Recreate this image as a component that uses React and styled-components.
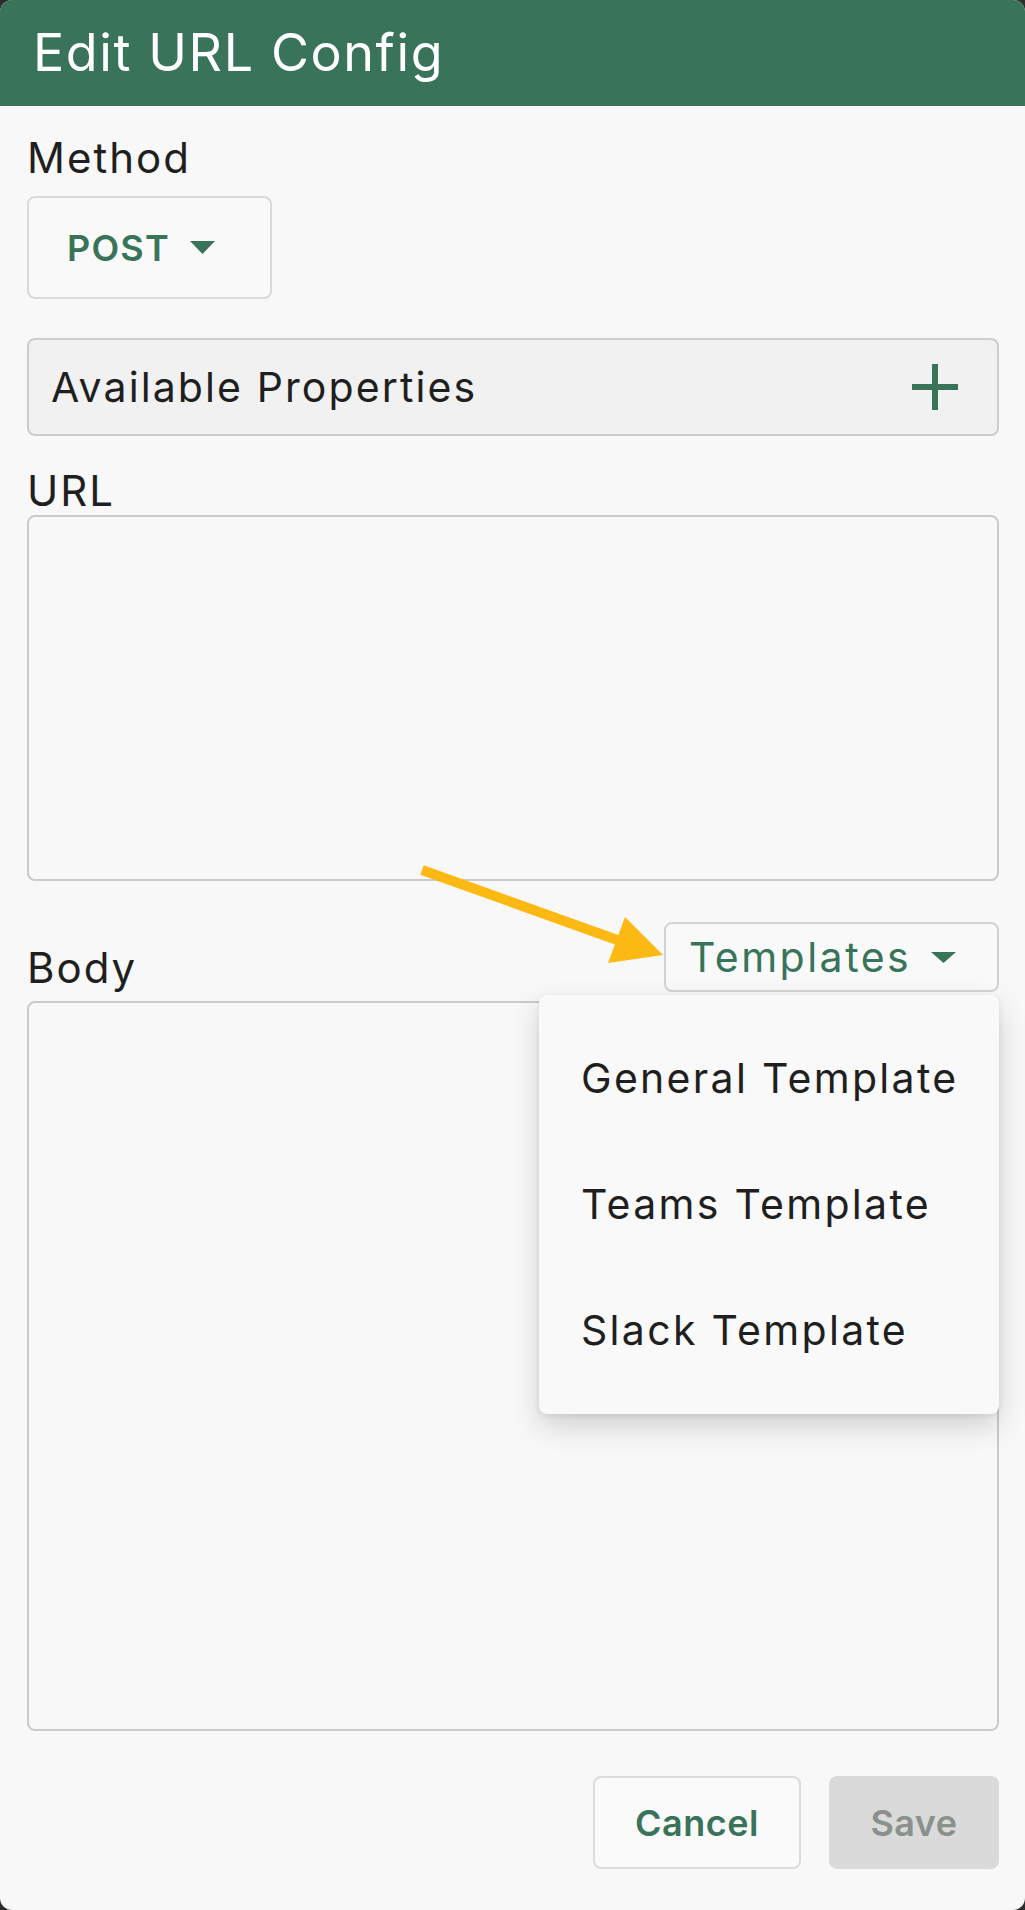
import React from 'react'
import styled, { createGlobalStyle } from 'styled-components'

const GlobalStyle = createGlobalStyle`
    * { box-sizing: border-box; }
    html, body {
        margin: 0;
        padding: 0;
        background: #2d2d2d;
        font-family: Inter, "Open Sans", sans-serif;
    }
`

const green = '#38735a'

const Dialog = styled.div`
    position: relative;
    width: 1025px;
    height: 1910px;
    background: #f8f8f8;
    border-radius: 12px;
    overflow: hidden;
    display: flex;
    flex-direction: column;
`

const Header = styled.div`
    height: 106px;
    flex: 0 0 106px;
    background: ${green};
    display: flex;
    align-items: center;
    padding-left: 33px;
`

const Title = styled.h1`
    margin: 0;
    font-size: 52px;
    line-height: 62px;
    font-weight: 400;
    color: #fff;
    letter-spacing: 1.6px;
`

const Content = styled.div`
    flex: 1;
    display: flex;
    flex-direction: column;
    padding: 28px 26px 40px 27px;
`

const Label = styled.div`
    font-size: 42px;
    line-height: 48px;
    color: #1f1f1f;
    letter-spacing: 2px;
    margin-top: ${p => p.$top || 0}px;
`

const MethodButton = styled.button`
    margin-top: 14px;
    width: 245px;
    height: 103px;
    border: 2px solid #d9d9d9;
    border-radius: 8px;
    background: #f9f9f9;
    display: flex;
    align-items: center;
    padding: 0 0 0 38px;
    gap: 20px;
    font-family: inherit;
    font-size: 36px;
    font-weight: 600;
    color: ${green};
    letter-spacing: 1.2px;
`

const Caret = ({ w = 25, h = 13 }) => (
    <svg width={w} height={h} viewBox="0 0 10 5" preserveAspectRatio="none">
        <path d="M0 0l5 5 5-5z" fill={green} />
    </svg>
)

const PropsBar = styled.div`
    margin-top: 39px;
    height: 98px;
    border: 2px solid #cdcdcd;
    border-radius: 8px;
    background: #f1f1f1;
    display: flex;
    align-items: center;
    justify-content: space-between;
    padding: 0 39px 0 22px;
    font-size: 41px;
    color: #1f1f1f;
    letter-spacing: 2.1px;
`

const PlusIcon = () => (
    <svg width="46" height="46" viewBox="0 0 46 46">
        <rect x="20" y="0" width="6" height="46" fill={green} />
        <rect x="0" y="20" width="46" height="6" fill={green} />
    </svg>
)

const Field = styled.textarea`
    display: block;
    width: 100%;
    height: ${p => p.$h}px;
    border: 2px solid #cbcbcb;
    border-radius: 8px;
    background: #f8f8f8;
    resize: none;
    outline: none;
    margin-top: ${p => p.$top || 0}px;
`

const BodyArea = styled.div`
    position: relative;
    margin-top: 41px;
`

const BodyRow = styled.div`
    display: flex;
    align-items: flex-end;
    justify-content: space-between;
`

const TemplatesButton = styled.button`
    width: 335px;
    height: 70px;
    border: 2px solid #d3d3d3;
    border-radius: 8px;
    background: #f9f9f9;
    display: flex;
    align-items: center;
    gap: 20px;
    padding: 0 0 0 23px;
    font-family: inherit;
    font-size: 41px;
    font-weight: 400;
    color: ${green};
    letter-spacing: 2.5px;
`

const Menu = styled.div`
    position: absolute;
    top: 73px;
    right: 0;
    width: 460px;
    padding: 20px 0 21px;
    background: #f9f9f9;
    border-radius: 8px;
    box-shadow: 0 12px 30px rgba(0, 0, 0, 0.16), 0 2px 6px rgba(0, 0, 0, 0.08);
`

const MenuItem = styled.div`
    height: 126px;
    display: flex;
    align-items: center;
    padding-left: 42px;
    font-size: 41px;
    color: #1f1f1f;
    letter-spacing: 2.3px;
`

const Footer = styled.div`
    margin-top: 45px;
    display: flex;
    justify-content: flex-end;
    gap: 28px;
`

const ActionButton = styled.button`
    height: 93px;
    width: ${p => p.$w}px;
    border-radius: 8px;
    border: 2px solid ${p => (p.disabled ? '#dadada' : '#dcdcdc')};
    background: ${p => (p.disabled ? '#dadada' : '#fafafa')};
    color: ${p => (p.disabled ? '#8a918d' : green)};
    font-family: inherit;
    font-size: 36px;
    font-weight: 600;
    letter-spacing: 0.5px;
`

const Pointer = styled.svg`
    position: absolute;
    left: 400px;
    top: 850px;
`

const templates = ['General Template', 'Teams Template', 'Slack Template']

const App = () => {
    return (
        <>
            <GlobalStyle />
            <Dialog>
                <Header>
                    <Title>Edit URL Config</Title>
                </Header>
                <Content>
                    <Label>Method</Label>
                    <MethodButton>
                        POST
                        <Caret />
                    </MethodButton>
                    <PropsBar>
                        Available Properties
                        <PlusIcon />
                    </PropsBar>
                    <Label $top={31}>URL</Label>
                    <Field $h={366} readOnly />
                    <BodyArea>
                        <BodyRow>
                            <Label>Body</Label>
                            <TemplatesButton>
                                Templates
                                <Caret h={11} />
                            </TemplatesButton>
                        </BodyRow>
                        <Field $h={730} $top={9} readOnly />
                        <Menu>
                            {templates.map((t, i) => (
                                <MenuItem key={i}>{t}</MenuItem>
                            ))}
                        </Menu>
                    </BodyArea>
                    <Footer>
                        <ActionButton $w={208}>Cancel</ActionButton>
                        <ActionButton $w={170} disabled>Save</ActionButton>
                    </Footer>
                </Content>
                <Pointer width="280" height="130" viewBox="0 0 280 130">
                    <line x1="22" y1="20" x2="220" y2="91" stroke="#fdb913" strokeWidth="10" />
                    <polygon points="263,105 225,67 208,113" fill="#fdb913" />
                </Pointer>
            </Dialog>
        </>
    )
}

export default App
